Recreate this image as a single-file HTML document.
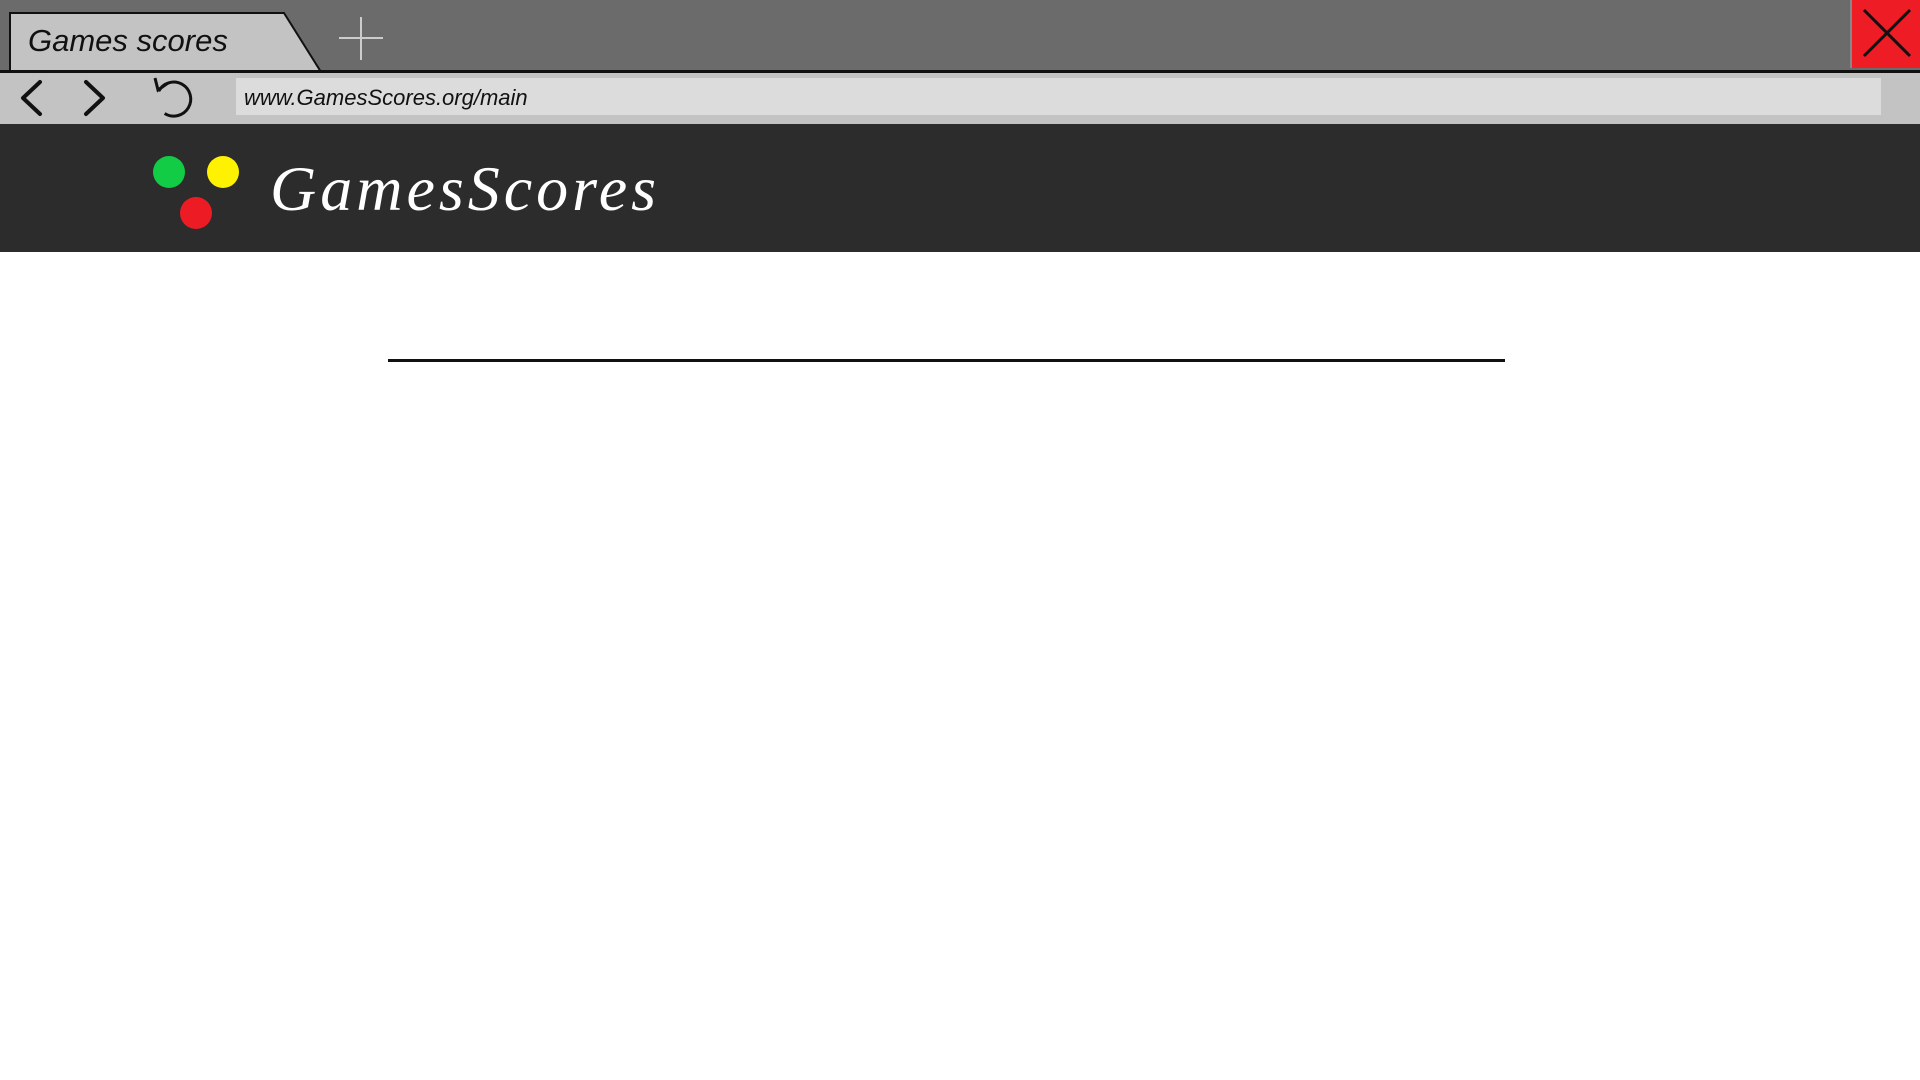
<!DOCTYPE html>
<html><head><style>
body{margin:0;width:1920px;height:1080px;background:#fff;position:relative;overflow:hidden;font-family:"Liberation Sans",sans-serif}
.top{position:absolute;left:0;top:0;width:1920px;height:70px;background:#6b6b6b}
.bar{position:absolute;left:0;top:70px;width:1920px;height:54px;background:#c3c3c3;border-top:3px solid #111;box-sizing:border-box}
.hdr{position:absolute;left:0;top:124px;width:1920px;height:128px;background:#2c2c2c}
.addr{position:absolute;left:236px;top:78px;width:1645px;height:37px;background:#dcdcdc;font-style:italic;font-size:22px;line-height:39px;padding-left:8px;box-sizing:border-box;color:#111}
.close{position:absolute;left:1850px;top:0;width:70px;height:68px;background:#ee1c24;border-left:2px solid #888;box-sizing:border-box}
.dot{position:absolute;width:32px;height:32px;border-radius:50%}
.logo{position:absolute;left:270px;top:152px;font-family:"Liberation Serif",serif;font-style:italic;font-size:64px;color:#fff;letter-spacing:4px}
.line{position:absolute;left:388px;top:359px;width:1117px;height:3px;background:#111}
</style></head><body>
<div class="top"></div>
<svg style="position:absolute;left:0;top:0" width="400" height="75">
<path d="M10 72 L10 13 L284 13 L321 72 Z" fill="#c3c3c3" stroke="#111" stroke-width="2"/>
<line x1="339" y1="38" x2="383" y2="38" stroke="#ccc" stroke-width="2"/>
<line x1="361" y1="17" x2="361" y2="60" stroke="#ccc" stroke-width="2"/>
</svg>
<div style="position:absolute;left:28px;top:23px;font-style:italic;font-size:31px;color:#111">Games scores</div>
<div class="bar"></div>
<svg style="position:absolute;left:0;top:70px" width="230" height="54">
<path d="M40 12 L23 28 L40 44" fill="none" stroke="#111" stroke-width="4" stroke-linecap="round" stroke-linejoin="round"/>
<path d="M86 12 L103 28 L86 44" fill="none" stroke="#111" stroke-width="4" stroke-linecap="round" stroke-linejoin="round"/>
<path d="M162 16 A17 17 0 1 1 160 39" fill="none" stroke="#111" stroke-width="3" transform="rotate(-20 175 28)"/>
<path d="M155 8 L158 20 L168 13" fill="none" stroke="#111" stroke-width="3"/>
</svg>
<div class="addr">www.GamesScores.org/main</div>
<div class="close"><svg width="68" height="68"><path d="M12 10 L58 56 M58 10 L12 56" stroke="#111" stroke-width="3"/></svg></div>
<div class="hdr"></div>
<div class="dot" style="left:153px;top:156px;background:#11cc44"></div>
<div class="dot" style="left:207px;top:156px;background:#fff200"></div>
<div class="dot" style="left:180px;top:197px;background:#ed1c24"></div>
<div class="logo">GamesScores</div>
<div class="line"></div>
</body></html>
